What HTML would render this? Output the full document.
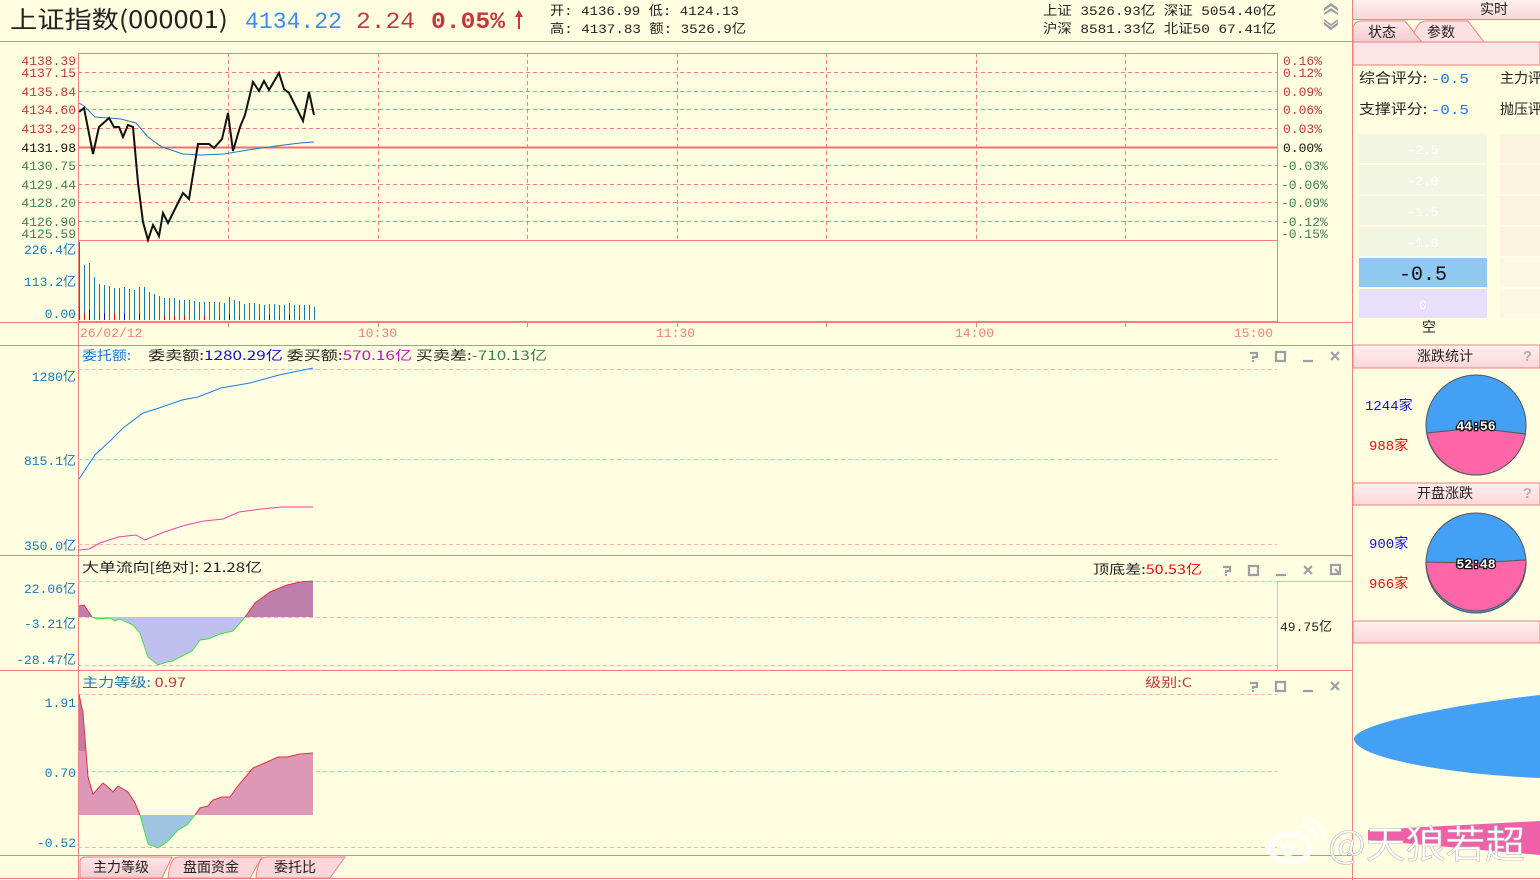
<!DOCTYPE html>
<html><head><meta charset="utf-8">
<style>
html,body{margin:0;padding:0;background:#fffee0;}
body{width:1540px;height:880px;position:relative;overflow:hidden;font-family:"Liberation Mono","Noto Sans CJK SC",monospace;}
svg{position:absolute;left:0;top:0;}
</style></head>
<body>
<svg width="1540" height="880" viewBox="0 0 1540 880" xmlns="http://www.w3.org/2000/svg" font-family="Liberation Mono, Noto Sans CJK SC, monospace">
<defs>
<linearGradient id="pk" x1="0" y1="0" x2="0" y2="1"><stop offset="0" stop-color="#fff0f0"/><stop offset="1" stop-color="#fcd6d8"/></linearGradient>
<linearGradient id="tab" x1="0" y1="0" x2="0" y2="1"><stop offset="0" stop-color="#fde8ea"/><stop offset="1" stop-color="#f6c9cd"/></linearGradient>
</defs>
<rect width="1540" height="880" fill="#fffee0"/>

<!-- header -->
<text x="10" y="28" font-size="24" fill="#222" font-family="Noto Sans CJK SC, sans-serif" textLength="218" lengthAdjust="spacingAndGlyphs">上证指数(000001)</text>
<text x="245" y="28" font-size="23" fill="#3a8ef0" textLength="97" lengthAdjust="spacingAndGlyphs">4134.22</text>
<text x="356" y="28" font-size="23" fill="#c0393b" textLength="59" lengthAdjust="spacingAndGlyphs">2.24</text>
<text x="431" y="28" font-size="23" fill="#c0393b" font-weight="bold" textLength="74" lengthAdjust="spacingAndGlyphs">0.05%</text>
<path d="M519 10 L515 17 H518 V29 H520 V17 H523 Z" fill="#c0393b"/>
<g font-size="13" fill="#222">
<text x="550" y="15" textLength="189" lengthAdjust="spacingAndGlyphs">开: 4136.99  低: 4124.13</text>
<text x="550" y="33" textLength="196" lengthAdjust="spacingAndGlyphs">高: 4137.83  额: 3526.9亿</text>
<text x="1043" y="15" textLength="233" lengthAdjust="spacingAndGlyphs">上证 3526.93亿  深证 5054.40亿</text>
<text x="1043" y="33" textLength="233" lengthAdjust="spacingAndGlyphs">沪深 8581.33亿  北证50 67.41亿</text>
</g>
<g fill="#9aa0a6"><path d="M1324 8 L1331 3 L1338 8 L1338 11 L1331 6 L1324 11Z"/><path d="M1324 13 L1331 8 L1338 13 L1338 15 L1331 11 L1324 15Z"/><path d="M1324 22 L1331 27 L1338 22 L1338 25 L1331 30 L1324 25Z"/><path d="M1324 19 L1331 24 L1338 19 L1338 21 L1331 26 L1324 21Z"/></g>
<line x1="0" y1="41.5" x2="1352" y2="41.5" stroke="#f08080"/>

<!-- main chart frames -->
<g stroke="#f08080" fill="none">
<rect x="78.5" y="53.5" width="1199" height="268"/>
<line x1="78" y1="240.5" x2="1277" y2="240.5"/>
<line x1="0" y1="322.5" x2="1352" y2="322.5"/>
<line x1="0" y1="345.5" x2="1352" y2="345.5"/>
<line x1="0" y1="555.5" x2="1352" y2="555.5"/>
<line x1="0" y1="670.5" x2="1352" y2="670.5"/>
<line x1="0" y1="855.5" x2="1352" y2="855.5"/>
<line x1="0" y1="878.5" x2="1540" y2="878.5"/>
<line x1="78.5" y1="322" x2="78.5" y2="880"/>
<line x1="1352.5" y1="0" x2="1352.5" y2="880"/>
<line x1="1277.5" y1="581" x2="1277.5" y2="670" stroke="#f4b0b0"/>
<line x1="1277" y1="581.5" x2="1352" y2="581.5" stroke="#f4b0b0"/>
</g>
<g stroke="#f08080" stroke-dasharray="4,3" fill="none">
<path d="M78 72.5H1277M78 91.5H1277M78 109.5H1277M78 128.5H1277M78 165.5H1277M78 184.5H1277M78 202.5H1277M78 221.5H1277"/>
<path d="M228.5 53V240M378.5 53V240M527.5 53V240M677.5 53V240M826.5 53V240M976.5 53V240M1125.5 53V240"/>
</g>
<line x1="78" y1="147.5" x2="1277" y2="147.5" stroke="#f07070" stroke-width="2"/>
<g stroke="#f08080"><path d="M228.5 322v5M378.5 322v5M527.5 322v5M677.5 322v5M826.5 322v5M976.5 322v5M1125.5 322v5"/></g>
<g stroke="#f8b0b0" stroke-dasharray="4,3" fill="none">
<path d="M78 369.5H1277M78 459.5H1277M78 544.5H1277"/>
<path d="M78 581.5H1277M78 617.5H1277M78 665.5H1277"/>
<path d="M78 694.5H1277M78 771.5H1277M78 847.5H1277"/>
</g>

<!-- axis labels -->
<g font-size="13" text-anchor="end">
<g fill="#c0393b"><text x="76" y="65">4138.39</text><text x="76" y="77">4137.15</text><text x="76" y="96">4135.84</text><text x="76" y="114">4134.60</text><text x="76" y="133">4133.29</text></g>
<text x="76" y="152" fill="#111">4131.98</text>
<g fill="#3f7f55"><text x="76" y="170">4130.75</text><text x="76" y="189">4129.44</text><text x="76" y="207">4128.20</text><text x="76" y="226">4126.90</text><text x="76" y="238">4125.59</text></g>
<g fill="#1a78b8"><text x="76" y="254">226.4亿</text><text x="76" y="286">113.2亿</text><text x="76" y="318">0.00</text>
<text x="76" y="381">1280亿</text><text x="76" y="465">815.1亿</text><text x="76" y="550">350.0亿</text>
<text x="76" y="593">22.06亿</text><text x="76" y="628">-3.21亿</text><text x="76" y="664">-28.47亿</text>
<text x="76" y="707">1.91</text><text x="76" y="777">0.70</text><text x="76" y="847">-0.52</text></g>
</g>
<g font-size="13">
<g fill="#c0393b"><text x="1283" y="65">0.16%</text><text x="1283" y="77">0.12%</text><text x="1283" y="96">0.09%</text><text x="1283" y="114">0.06%</text><text x="1283" y="133">0.03%</text></g>
<text x="1283" y="152" fill="#111">0.00%</text>
<g fill="#3f7f55"><text x="1281" y="170">-0.03%</text><text x="1281" y="189">-0.06%</text><text x="1281" y="207">-0.09%</text><text x="1281" y="226">-0.12%</text><text x="1281" y="238">-0.15%</text></g>
<g fill="#f08080"><text x="80" y="337">26/02/12</text><text x="358" y="337">10:30</text><text x="656" y="337">11:30</text><text x="955" y="337">14:00</text><text x="1234" y="337">15:00</text></g>
<text x="1280" y="631" fill="#222">49.75亿</text>
</g>

<!-- price lines -->
<polyline fill="none" stroke="#1a7cc0" stroke-width="1" points="79,103 84,106 95,117 121,119 136,123 148,137 162,147 183,154 200,155 224,154 248,150 276,146 300,143 314,142"/>
<polyline fill="none" stroke="#111" stroke-width="2" points="79,112 84,108 93,154 99,127 109,118 114,127 119,127 123,137 128,125 133,127 138,183 143,222 148,240 153,225 159,236 163,213 168,223 183,193 189,199 198,144 209,144 214,148 222,139 228,113 233,151 240,127 245,115 253,82 259,91 264,81 269,90 279,73 284,89 289,93 303,121 309,92 314,115"/>
<!-- volume bars -->
<path stroke="#1a78b8" stroke-width="1" fill="none" d="M79.5 320V242M84.5 320V265M89.5 320V263M94.5 320V277M99.5 320V284M104.5 320V285M109.5 320V286M114.5 320V288M119.5 320V288M124.5 320V287M129.5 320V289M134.5 320V290M139.5 320V287M144.5 320V287M149.5 320V292M154.5 320V294M159.5 320V296M164.5 320V298M169.5 320V298M174.5 320V298M179.5 320V300M184.5 320V300M189.5 320V300M194.5 320V301M199.5 320V302M204.5 320V302M209.5 320V302M214.5 320V302M219.5 320V302M224.5 320V303M229.5 320V297M234.5 320V300M239.5 320V301M244.5 320V304M249.5 320V303M254.5 320V303M259.5 320V304M264.5 320V305M269.5 320V304M274.5 320V304M279.5 320V305M284.5 320V305M289.5 320V303M294.5 320V305M299.5 320V305M304.5 320V305M309.5 320V305M314.5 320V307"/>
<path stroke="#e01010" stroke-width="1" d="M79.5 320V306M84.5 320V313M99.5 320V313M114.5 320V313M164.5 320V316M174.5 320V316M184.5 320V316M204.5 320V316M219.5 320V316M239.5 320V316M259.5 320V316M279.5 320V316M299.5 320V316"/>
<path stroke="#1010d0" stroke-width="1" d="M89.5 320V310M104.5 320V313M124.5 320V313M139.5 320V313M229.5 320V314M269.5 320V315M289.5 320V315"/>

<!-- panel titles -->
<g font-size="13" font-family="Noto Sans CJK SC, sans-serif">
<text x="82" y="360" fill="#1a78e0" textLength="49" lengthAdjust="spacingAndGlyphs">委托额:</text>
<text x="148" y="360" fill="#222" textLength="399" lengthAdjust="spacingAndGlyphs">委卖额:<tspan fill="#1010d0">1280.29亿</tspan>  委买额:<tspan fill="#c010c0">570.16亿</tspan>  买卖差:<tspan fill="#3f7f55">-710.13亿</tspan></text>
<text x="82" y="572" fill="#222" textLength="180" lengthAdjust="spacingAndGlyphs">大单流向[绝对]:  21.28亿</text>
<text x="1093" y="574" fill="#222" textLength="109" lengthAdjust="spacingAndGlyphs">顶底差:<tspan fill="#e01010">50.53亿</tspan></text>
<text x="82" y="687" fill="#1a78b8" textLength="104" lengthAdjust="spacingAndGlyphs">主力等级: <tspan fill="#c0393b">0.97</tspan></text>
<text x="1145" y="687" fill="#c0393b" textLength="47" lengthAdjust="spacingAndGlyphs">级别:C</text>
</g>
<polyline fill="none" stroke="#1a7cf0" points="79,479 95,455 111,440 123,428 143,413 159,408 182,400 198,397 221,388 250,383 279,375 313,368"/>
<polyline fill="none" stroke="#f040a0" points="79,550 89,549 100,543 118,537 136,535 145,540 164,532 186,525 204,521 223,519 239,512 261,509 282,507 313,507"/>

<!-- panel 3 -->
<path fill="#bf7fad" d="M79,617 79,606 84,605 92,617Z M245,617 255,603 270,592 287,585 300,582 313,581 313,617Z"/>
<path fill="#c0c0f0" d="M92,617 97,619 110,618 115,621 120,619 133,625 140,633 148,657 158,665 167,662 173,661 180,657 192,651 200,640 208,639 220,634 233,631 245,617Z"/>
<polyline fill="none" stroke="#e03040" points="79,606 84,605 92,617"/>
<polyline fill="none" stroke="#40e040" points="92,617 97,619 110,618 115,621 120,619 133,625 140,633 148,657 158,665 167,662 173,661 180,657 192,651 200,640 208,639 220,634 233,631 245,617"/>
<polyline fill="none" stroke="#e03040" points="245,617 255,603 270,592 287,585 300,582 313,581"/>

<!-- panel 4 -->
<path fill="#dd98b8" d="M79,815 79,694 83,713 88,777 93,794 103,783 108,787 113,792 118,786 128,792 135,803 140,815Z M195,815 200,808 208,806 213,800 222,797 230,797 237,787 253,768 267,762 278,757 287,757 300,754 313,753 313,815Z"/>
<path fill="#c87ba0" d="M79,751 79,694 83,713 86,751Z"/>
<path fill="#9ec4e0" d="M140,815 148,844 158,848 167,842 178,830 187,825 195,815Z"/>
<polyline fill="none" stroke="#e03040" points="79,694 83,713 88,777 93,794 103,783 108,787 113,792 118,786 128,792 135,803 140,815"/>
<polyline fill="none" stroke="#40e040" points="140,815 148,844 158,848 167,842 178,830 187,825 195,815"/>
<polyline fill="none" stroke="#e03040" points="195,815 200,808 208,806 213,800 222,797 230,797 237,787 253,768 267,762 278,757 287,757 300,754 313,753"/>

<!-- window icons -->
<g fill="none" stroke="#9aa0a6" stroke-width="2.2">
<g id="ic"><path d="M1250 353h7v4h-4v2"/><rect x="1252" y="360" width="2" height="2" fill="#9aa0a6" stroke="none"/><rect x="1276" y="352" width="9" height="9"/><path d="M1303 361h10M1331 352l8 8M1339 352l-8 8"/></g>
<use href="#ic" x="-27" y="214"/>
<path d="M1331 565h9v9h-9z M1335 569l4 4"/>
<use href="#ic" x="0" y="330"/>
</g>

<!-- bottom tabs -->
<path d="M80 878 V862 Q80 857 86 857 H172 L162 878Z" fill="url(#tab)" stroke="#f08080"/>
<path d="M168 878 Q170 857 178 857 H262 L250 878Z" fill="#fcd6d8" stroke="#f08080"/>
<path d="M256 878 Q258 857 266 857 H345 L330 878Z" fill="#fcd6d8" stroke="#f08080"/>
<g font-size="14" fill="#222" font-family="Noto Sans CJK SC, sans-serif"><text x="93" y="872">主力等级</text><text x="183" y="872">盘面资金</text><text x="274" y="872">委托比</text></g>

<!-- right sidebar -->
<rect x="1353" y="0" width="187" height="19" fill="url(#pk)"/>
<line x1="1353" y1="19.5" x2="1540" y2="19.5" stroke="#f08080"/>
<text x="1480" y="14" font-size="14" fill="#222" font-family="Noto Sans CJK SC, sans-serif">实时</text>
<path d="M1353 42 V27 Q1355 21 1362 21 H1405 L1422 42Z" fill="url(#tab)" stroke="#f08080"/>
<path d="M1414 33 Q1418 21 1426 21 H1468 L1484 42 H1422Z" fill="#fde0e2" stroke="#f08080"/>
<g font-size="14" fill="#222" font-family="Noto Sans CJK SC, sans-serif"><text x="1368" y="37">状态</text><text x="1427" y="37">参数</text></g>
<rect x="1353" y="42" width="187" height="23" fill="#fde4e6" stroke="#f08080"/>
<g font-size="14" font-family="Noto Sans CJK SC, sans-serif" fill="#222">
<text x="1359" y="83" textLength="110" lengthAdjust="spacingAndGlyphs">综合评分: <tspan fill="#1a78f0" font-family="Liberation Mono">-0.5</tspan></text>
<text x="1359" y="114" textLength="110" lengthAdjust="spacingAndGlyphs">支撑评分: <tspan fill="#1a78f0" font-family="Liberation Mono">-0.5</tspan></text>
<text x="1500" y="83">主力评</text><text x="1500" y="114">抛压评</text>
</g>
<g fill="#f2f5e2"><rect x="1359" y="134" width="128" height="29"/><rect x="1359" y="165" width="128" height="29"/><rect x="1359" y="196" width="128" height="29"/><rect x="1359" y="227" width="128" height="29"/></g>
<g fill="#fbf2e0"><rect x="1500" y="134" width="40" height="29"/><rect x="1500" y="165" width="40" height="29"/><rect x="1500" y="196" width="40" height="29"/><rect x="1500" y="227" width="40" height="29"/><rect x="1500" y="258" width="40" height="29" fill="#fbf8e4"/><rect x="1500" y="289" width="40" height="29" fill="#fbf8e4"/></g>
<rect x="1359" y="258" width="128" height="29" fill="#90c8f0"/>
<rect x="1359" y="289" width="128" height="29" fill="#e8e0fa"/>
<g font-size="13" fill="#fff" text-anchor="middle"><text x="1423" y="154">-2.5</text><text x="1423" y="185">-2.0</text><text x="1423" y="216">-1.5</text><text x="1423" y="247">-1.0</text><text x="1423" y="309">0</text></g>
<text x="1423" y="280" font-size="20" fill="#111" text-anchor="middle">-0.5</text>
<text x="1422" y="332" font-size="14" fill="#222" font-family="Noto Sans CJK SC, sans-serif">空</text>

<rect x="1353" y="345" width="187" height="23" fill="url(#pk)" stroke="#f08080"/>
<rect x="1353" y="483" width="187" height="22" fill="url(#pk)" stroke="#f08080"/>
<rect x="1353" y="621" width="187" height="22" fill="url(#pk)" stroke="#f08080"/>
<g font-size="14" fill="#222" font-family="Noto Sans CJK SC, sans-serif"><text x="1417" y="361">涨跌统计</text><text x="1417" y="498">开盘涨跌</text></g>
<g fill="#b0b0b0" font-size="15" font-weight="bold"><text x="1523" y="361">?</text><text x="1523" y="498">?</text></g>
<g font-size="14"><text x="1365" y="410" fill="#1010e0">1244家</text><text x="1369" y="450" fill="#e01010">988家</text><text x="1369" y="548" fill="#1010e0">900家</text><text x="1369" y="588" fill="#e01010">966家</text></g>
<circle cx="1476" cy="425" r="50" fill="#44a0f4" stroke="#555"/>
<path d="M1476 428 L1427 433 A50 50 0 0 0 1525.5 434 Z" fill="#ff66a8" stroke="#555"/>
<circle cx="1476" cy="563" r="50" fill="#44a0f4" stroke="#555"/>
<path d="M1476 563 L1426 562 A50 50 0 0 0 1526 560 Z" fill="#ff66a8" stroke="#555"/>
<g font-size="13" font-weight="bold" fill="#fff" stroke="#111" stroke-width="2.5" paint-order="stroke" text-anchor="middle"><text x="1476" y="430">44:56</text><text x="1476" y="568">52:48</text></g>

<path d="M1540 695 C1450 705 1350 725 1354 740 C1360 760 1460 775 1540 778Z" fill="#44a0f4"/>
<path d="M1368 830 L1540 821 L1540 855 L1368 840Z" fill="#f060a8"/>
<!-- watermark -->
<g fill="#fff" opacity="0.9">
<ellipse cx="1290" cy="848" rx="20" ry="14" fill="none" stroke="#fff" stroke-width="5"/>
<circle cx="1288" cy="850" r="5" fill="none" stroke="#fff" stroke-width="3"/>
<path d="M1300 826 Q1315 826 1316 840" fill="none" stroke="#fff" stroke-width="3"/>
<path d="M1302 818 Q1322 818 1324 840" fill="none" stroke="#fff" stroke-width="3"/>
</g>
<text x="1328" y="858" font-size="38" fill="#fff" stroke="#bbb" stroke-width="0.6" font-family="Noto Sans CJK SC, sans-serif" textLength="197" lengthAdjust="spacingAndGlyphs">@天狼若超</text>
</svg>
</body></html>
